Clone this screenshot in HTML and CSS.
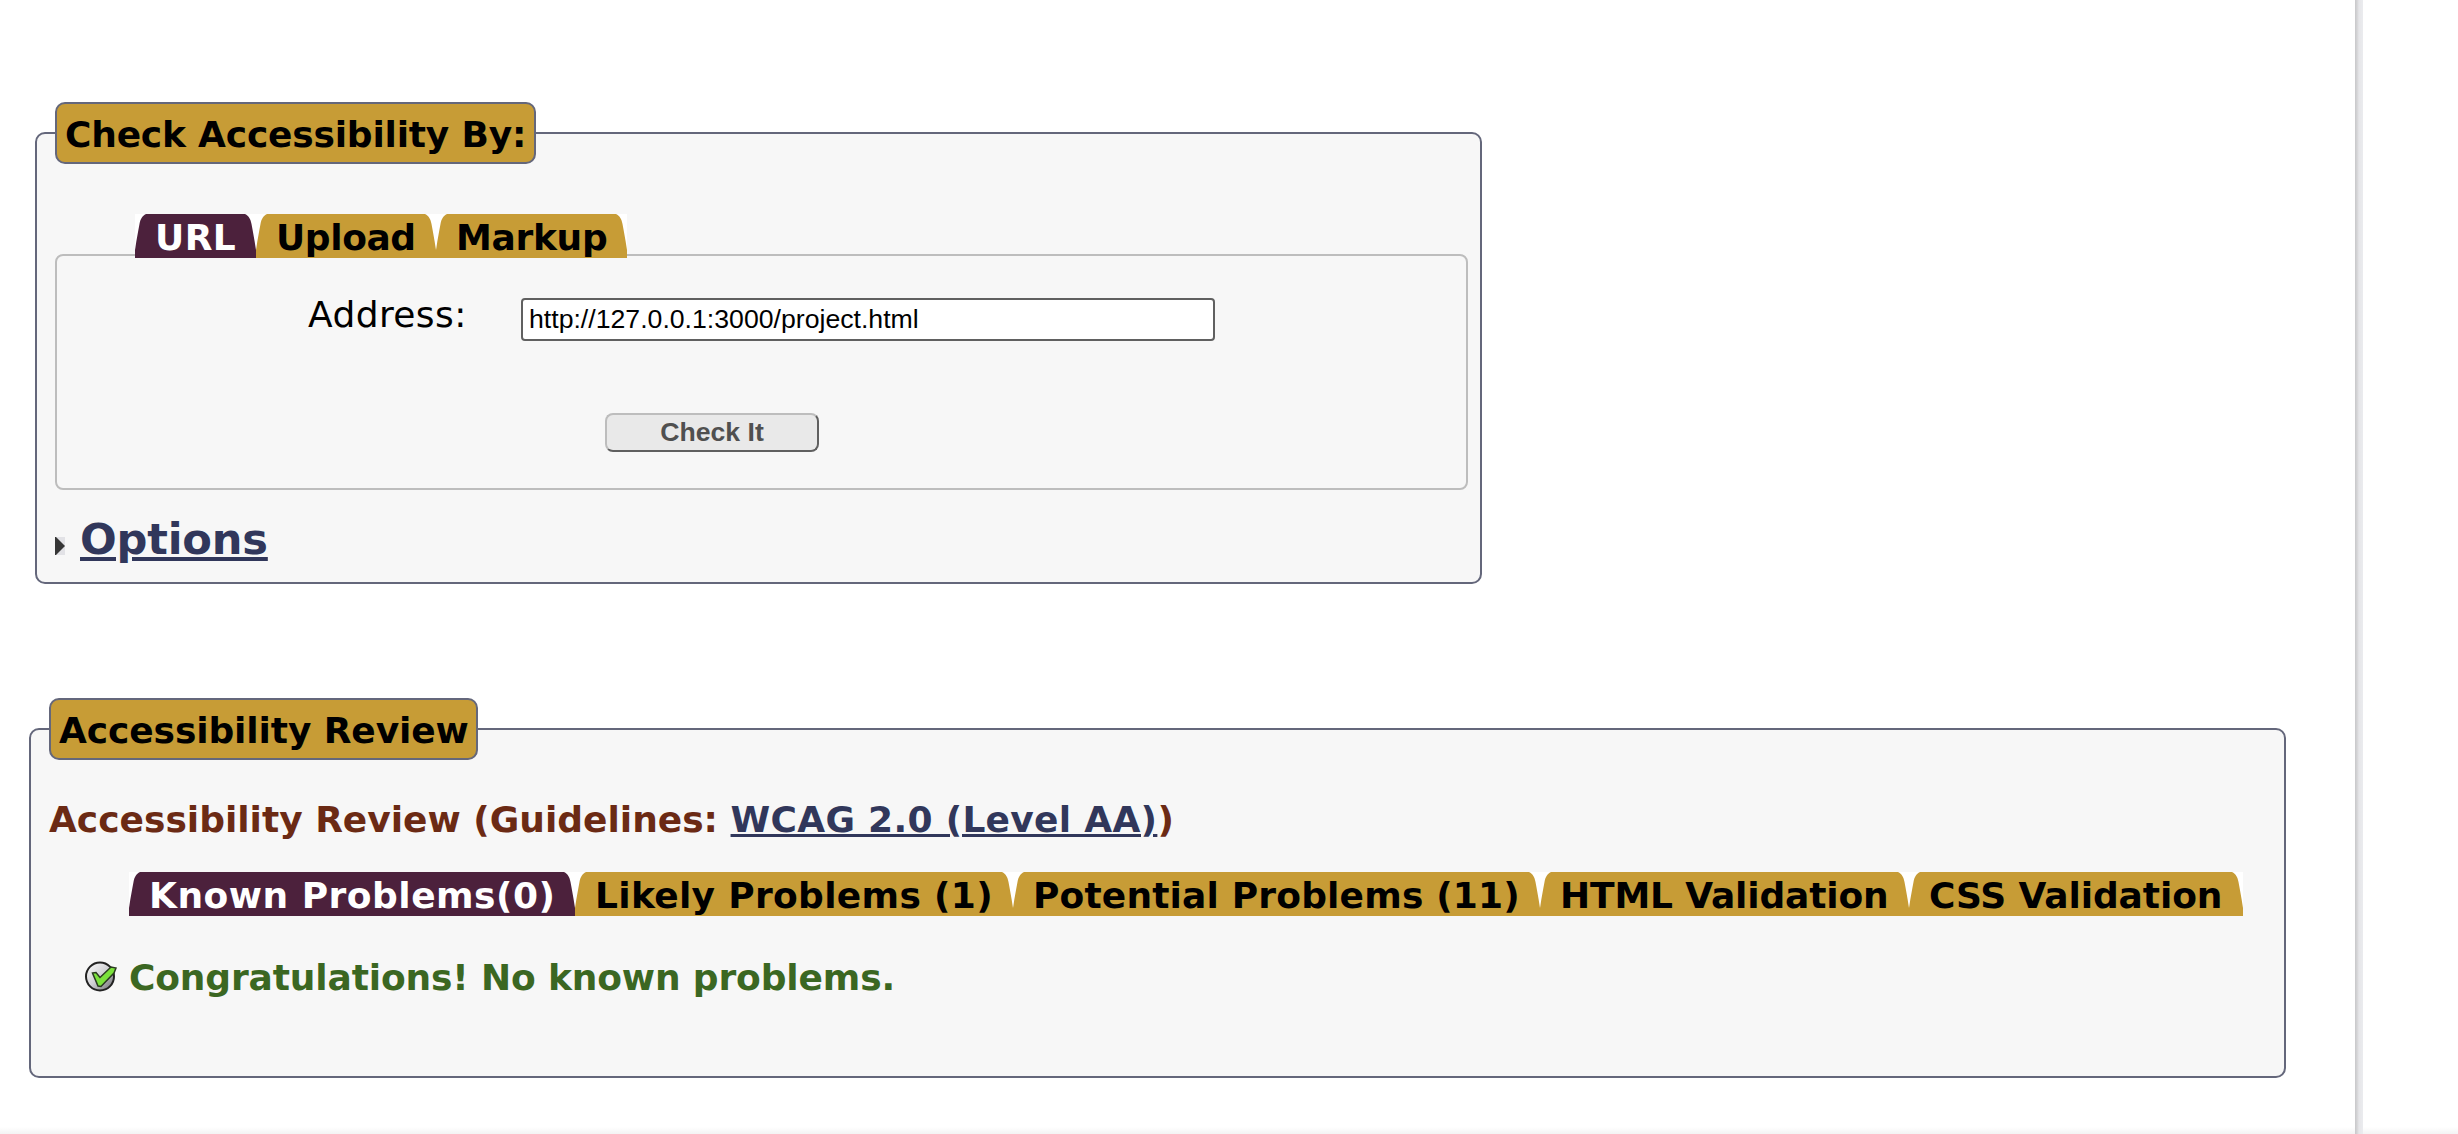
FILE: index.html
```html
<!DOCTYPE html>
<html lang="en">
<head>
<meta charset="utf-8">
<title>Accessibility Checker</title>
<link rel="stylesheet" href="styles.css">
</head>
<body>
<svg class="defs" aria-hidden="true">
  <symbol id="corner" viewBox="0 0 14 44"><path fill="#fff" d="M0 0H11C7 2 5.500 5 4.500 10C3 18 1.500 26 0.500 33L0 36Z"/></symbol>
</svg>
<main class="page">
  <section class="box checker">
    <h2 class="legend legend-check">Check Accessibility By:</h2>
    <nav class="tabs">
      <a class="tab active t-url"><svg class="l"><use href="#corner"/></svg>URL<svg class="r"><use href="#corner"/></svg></a>
      <a class="tab t-upload"><svg class="l"><use href="#corner"/></svg>Upload<svg class="r"><use href="#corner"/></svg></a>
      <a class="tab t-markup"><svg class="l"><use href="#corner"/></svg>Markup<svg class="r"><use href="#corner"/></svg></a>
    </nav>
    <form class="panel">
      <div class="row">
        <label class="label" for="uri">Address:</label>
        <input class="uri" id="uri" type="text" value="http://127.0.0.1:3000/project.html">
      </div>
      <button class="submit" type="button">Check It</button>
    </form>
    <h2 class="options">
      <svg class="arrow" viewBox="0 0 10 18"><path fill="#e2e2e6" d="M0 0H10V18H0Z"/><path fill="#363636" d="M0 0H1L10 9L1 18H0Z"/></svg>
      <a class="options-link">Options</a>
    </h2>
  </section>

  <section class="box review">
    <h2 class="legend legend-review">Accessibility Review</h2>
    <h3 class="guidelines">Accessibility Review (Guidelines: <a class="guide-link">WCAG 2.0 (Level AA)</a>)</h3>
    <nav class="tabs">
      <a class="tab active t-known"><svg class="l"><use href="#corner"/></svg>Known Problems(0)<svg class="r"><use href="#corner"/></svg></a>
      <a class="tab t-likely"><svg class="l"><use href="#corner"/></svg>Likely Problems (1)<svg class="r"><use href="#corner"/></svg></a>
      <a class="tab t-potential"><svg class="l"><use href="#corner"/></svg>Potential Problems (11)<svg class="r"><use href="#corner"/></svg></a>
      <a class="tab t-html"><svg class="l"><use href="#corner"/></svg>HTML Validation<svg class="r"><use href="#corner"/></svg></a>
      <a class="tab t-css"><svg class="l"><use href="#corner"/></svg>CSS Validation<svg class="r"><use href="#corner"/></svg></a>
    </nav>
    <p class="success">
      <svg class="ok" viewBox="0 0 32 31">
        <defs><linearGradient id="disc" x1="0" y1="0" x2="1" y2="1"><stop offset="0" stop-color="#fff"/><stop offset=".5" stop-color="#d0d0d4"/><stop offset="1" stop-color="#66666a"/></linearGradient></defs>
        <circle cx="15" cy="15.500" r="14" fill="url(#disc)" stroke="#222" stroke-width="2"/>
        <path d="M7.500 12L11 11.500L15 16.500L26 6L31 7L29 12L16 25.500L13 25Z" fill="#7be23c" stroke="#2a3a20" stroke-width="1.500"/>
      </svg>
      Congratulations! No known problems.
    </p>
  </section>
</main>
</body>
</html>
```
FILE: styles.css
```css
* { box-sizing: border-box; }
body {
  margin: 0;
  height: 1134px;
  overflow: hidden;
  background: linear-gradient(to top, #f3f3f3, #fff 7px);
  font: 36px "DejaVu Sans", Verdana, sans-serif;
  color: #000;
}
.defs { position: absolute; width: 0; height: 0; }
.page {
  width: 2363px;
  height: 1134px;
  padding-right: 8px;
  background: linear-gradient(to left, #ebecef, #e6e6e9 4px, #d4d4d6 6px, #c8c8ca 8px, transparent 8px);
  display: flow-root;
}
h2, h3, p { margin: 0; font-size: 36px; }
.box {
  border: 2px solid #64677b;
  border-radius: 10px;
  background: #f7f7f7;
  padding-left: 18px;
}
.checker { margin: 132px 0 0 35px; width: 1447px; height: 452px; }
.review { margin: 144px 0 0 29px; width: 2257px; height: 350px; }
.legend {
  height: 62px;
  margin-top: -32px;
  padding: 2px 8px 0;
  border: 2px solid #64677b;
  border-radius: 10px;
  background: #c79c36;
  line-height: 58px;
  white-space: nowrap;
}
.legend-check { width: 481px; letter-spacing: -0.2px; }
.legend-review { width: 429px; letter-spacing: -0.1px; }
.tabs {
  position: relative;
  display: flex;
  height: 44px;
  margin-left: 80px;
}
.checker .tabs { margin-top: 50px; }
.review .tabs { margin-top: 31px; }
.tab {
  position: relative;
  height: 44px;
  padding: 3px 0 0 20px;
  background: #c79c36;
  font-weight: bold;
  line-height: 42px;
  white-space: nowrap;
}
.active { background: #4c213c; color: #fff; }
.tab svg { position: absolute; top: 0; width: 14px; height: 44px; }
.tab .l { left: 0; }
.tab .r { right: 0; transform: scaleX(-1); }
.t-url { width: 121px; letter-spacing: 0.4px; }
.t-upload { width: 180px; letter-spacing: -0.4px; }
.t-markup { width: 191px; letter-spacing: -0.3px; }
.t-known { width: 446px; letter-spacing: 0.5px; }
.t-likely { width: 438px; letter-spacing: 0.32px; }
.t-potential { width: 527px; letter-spacing: 0.17px; }
.t-html { width: 369px; letter-spacing: -0.15px; }
.t-css { width: 334px; letter-spacing: -0.1px; }
.panel {
  width: 1413px;
  height: 236px;
  margin-top: -4px;
  padding-top: 42px;
  border: 2px solid #bdbdbd;
  border-radius: 8px;
}
.row { display: flex; align-items: flex-start; padding-left: 251px; }
.label { width: 213px; line-height: 42px; margin-top: -4px; letter-spacing: 0.4px; }
.uri {
  width: 694px;
  height: 43px;
  padding: 0 6px;
  border: 2px solid #606060;
  border-radius: 4px;
  background: #fff;
  color: #000;
  font: 26.67px "Liberation Sans", Arial, sans-serif;
}
.submit {
  display: block;
  width: 214px;
  height: 39px;
  margin: 72px 0 0 548px;
  padding: 0 0 1px;
  border: 2px solid;
  border-color: #bdbdbd #606060 #606060 #bdbdbd;
  border-radius: 8px;
  background: #e9e9e9;
  color: #505050;
  font: bold 26.67px "Liberation Sans", Arial, sans-serif;
}
.options { display: flex; margin-top: 24px; font-size: 43.2px; line-height: 50px; }
.arrow { width: 10px; height: 18px; margin: 23px 15px 0 0; }
.options-link {
  color: #31375b;
  letter-spacing: -0.2px;
  text-decoration: underline;
  text-decoration-thickness: 4px;
  text-underline-offset: 3px;
}
.guidelines { margin-top: 39px; line-height: 42px; height: 42px; color: #6b2a14; white-space: nowrap; }
.guide-link {
  color: #31375b;
  letter-spacing: 0.3px;
  text-decoration: underline;
  text-decoration-thickness: 3px;
  text-underline-offset: 2px;
}
.success {
  display: flex;
  margin: 41px 0 0 36px;
  color: #3b6722;
  font-weight: bold;
  line-height: 42px;
  letter-spacing: -0.14px;
  white-space: nowrap;
}
.ok { width: 32px; height: 31px; margin: 4px 12px 0 0; }
```
